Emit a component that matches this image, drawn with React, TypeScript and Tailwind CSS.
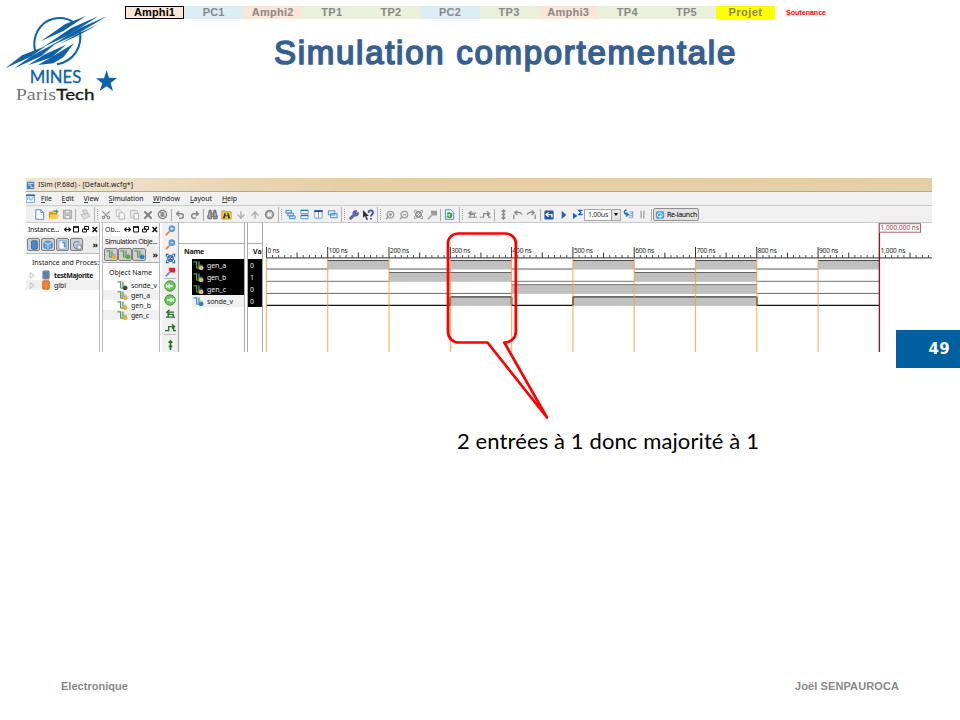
import React, { useLayoutEffect, useRef } from "react";
import { Scissors, Copy, X, Undo2, Redo2, Binoculars, ArrowDown, ArrowUp, CircleX, Wrench, ZoomIn, ZoomOut, Search } from "lucide-react";

/* Text whose tracking is adjusted so that it spans a given width. */
function Fit({ w, className = "", children }: { w: number; className?: string; children: string }) {
  const ref = useRef<HTMLSpanElement>(null);
  useLayoutEffect(() => {
    const el = ref.current;
    if (!el) return;
    el.style.letterSpacing = "0px";
    const natural = el.getBoundingClientRect().width;
    el.style.letterSpacing = `${(w - natural) / children.length}px`;
  }, [w, children]);
  return (
    <span ref={ref} className={`inline-block shrink-0 whitespace-pre ${className}`}>
      {children}
    </span>
  );
}

const tabs = [
  { t: "Amphi1", w: 41, c: "bg-[#fbe5d6] text-black outline outline-[1.5px] -outline-offset-1 outline-black" },
  { t: "PC1", w: 22, c: "bg-[#daeef3] text-[#898989]" },
  { t: "Amphi2", w: 42, c: "bg-[#fbe5d6] text-[#898989]" },
  { t: "TP1", w: 21, c: "bg-[#e9f0dc] text-[#898989]" },
  { t: "TP2", w: 21, c: "bg-[#e9f0dc] text-[#898989]" },
  { t: "PC2", w: 22, c: "bg-[#daeef3] text-[#898989]" },
  { t: "TP3", w: 21, c: "bg-[#e9f0dc] text-[#898989]" },
  { t: "Amphi3", w: 42, c: "bg-[#fbe5d6] text-[#898989]" },
  { t: "TP4", w: 21, c: "bg-[#e9f0dc] text-[#898989]" },
  { t: "TP5", w: 21, c: "bg-[#e9f0dc] text-[#898989]" },
  { t: "Projet", w: 34, c: "bg-[#ffff00] text-[#898950]" },
];

function Logo() {
  return (
    <svg className="block h-[110px] w-[124px]" viewBox="0 0 372 330">
      <g stroke="#0f62a5" strokeWidth="6" fill="none">
        <path d="M106 156C94 112 118 66 160 56c24-5 46 0 62 12" />
        <path d="M239 92c10 48-18 92-68 101" />
      </g>
      <g fill="#0f62a5">
        <path d="M258 48L196 72 122 124 190 93z" />
        <path d="M296 48L214 84 128 142 206 106z" />
        <path d="M322 48L240 84 152 138 226 105z" />
        <path d="M296 72L236 100 178 132 232 108z" />
        <path d="M16 205L66 166 138 138 92 170z" />
        <path d="M43 205L98 166 172 126 124 168z" />
        <path d="M84 196L132 164 198 134 156 172z" />
        <path d="M114 195L160 168 222 130 190 172 160 190z" />
        <path d="M320 211l7 22 24 1-19 15 7 24-19-14-21 14 8-23-19-15h24z" />
      </g>
      <text x="89" y="249" fontFamily="Lato, sans-serif" fontSize="49" textLength="155" lengthAdjust="spacingAndGlyphs" fill="#0f62a5" stroke="#0f62a5" strokeWidth="1">MINES</text>
      <text x="47" y="300" fontFamily="Liberation Serif, serif" fontSize="48" textLength="121" lengthAdjust="spacingAndGlyphs" fill="#77777f">Paris</text>
      <text x="169" y="300" fontFamily="Lato, sans-serif" fontSize="47" textLength="115" lengthAdjust="spacingAndGlyphs" fill="#18181c" stroke="#18181c" strokeWidth="1">Tech</text>
    </svg>
  );
}

function Cell({ w = "w-[14px]", children }: { w?: string; children?: React.ReactNode }) {
  return <span className={`flex h-full shrink-0 items-center justify-center ${w}`}>{children}</span>;
}
const Line = ({ w = "w-[3px]" }: { w?: string }) => (
  <Cell w={w}><i className="h-[12px] w-px bg-[#a9a9a9]" /></Cell>
);
const Grip = ({ w = "w-[8px]" }: { w?: string }) => (
  <Cell w={w}>
    <i className="h-[15px] w-px bg-[#b5b5b5]" />
    <i className="ml-[2px] h-[11px] border-l border-dotted border-[#a0a0a0]" />
  </Cell>
);
function G({ children, size = "size-[11px]" }: { children: React.ReactNode; size?: string }) {
  return <svg viewBox="0 0 12 12" className={`${size} shrink-0`} fill="none">{children}</svg>;
}

const gray = "#8b8b8b";
function Toolbar() {
  return (
    <div className="flex h-[17px] shrink-0 items-center border-b border-[#c9c9c9] bg-[#f0f0f0] pt-px">
      <Cell w="w-[6px]" />
      <Cell><G><path d="M2 .8h5.5l3 3V11.300H2z" fill="#fff" stroke="#3f86d0" /><path d="M7.500 .8v3h3" stroke="#3f86d0" /></G></Cell>
      <Cell><G><path d="M1 3h4l1 1h4v7H1z" fill="#d99a1b" /><path d="M3 6h9l-2 5H1z" fill="#f7cf48" /><path d="M5 3c1-2 3-2 4-1V0l2.500 3L9 5V3.500C8 3 6.500 3 5 3z" fill="#3ea02e" /></G></Cell>
      <Cell><G><path d="M1.500 1.500h9v9h-9z" fill="#c9c9c9" stroke="#a2a2a2" /><path d="M3.500 1.500h5v3h-5zM3.500 7h5v3.500h-5z" fill="#eee" stroke="#aaa" /></G></Cell>
      <Line />
      <Cell w="w-[16px]"><G><path d="M3 1h4l2 4H4zM1 6l8-1 2 3-7 3z" fill="#ddd" stroke="#bdbdbd" /></G></Cell>
      <Grip w="w-[6px]" />
      <Cell><Scissors size={10} strokeWidth={2.500} color={gray} className="-rotate-90" /></Cell>
      <Cell><G><path d="M1.500 1h4l2 2v5h-6z" fill="#f4f4f4" stroke="#bbb" /><path d="M4.500 4h4l2 2v5h-6z" fill="#f4f4f4" stroke="#b0b0b0" /></G></Cell>
      <Cell><G><path d="M1.500 1.500h7l1 2v6h-8z" fill="#e9e9e9" stroke="#b8b8b8" /><path d="M5.500 5h5v6h-5z" fill="#fff" stroke="#aaa" /></G></Cell>
      <Cell><X size={12} strokeWidth={4} color="#818181" /></Cell>
      <Cell w="w-[15px]"><G><circle cx="6" cy="6" r="4.500" stroke="#777" strokeWidth="1.300" /><path d="M4.500 4h3v4h-3zM3 3l6 6M3.500 8l5-5" fill="#999" stroke="#888" /></G></Cell>
      <Line />
      <Cell><Undo2 size={10} strokeWidth={3.500} color="#858585" /></Cell>
      <Cell w="w-[15px]"><Redo2 size={10} strokeWidth={3.500} color="#858585" /></Cell>
      <Line />
      <Cell><Binoculars size={11} strokeWidth={2.600} color="#777" fill="#aaa" /></Cell>
      <Cell w="w-[15px]"><G><path d="M1 2h4l1 1h5v8H1z" fill="#f2cd45" stroke="#c49920" /><path d="M2 10l2-6h1v3h2V4h1l2 6H7.500V8h-3v2z" fill="#333" /></G></Cell>
      <Cell><ArrowDown size={10} strokeWidth={3.500} color="#b0b0b0" /></Cell>
      <Cell><ArrowUp size={10} strokeWidth={3.500} color="#b0b0b0" /></Cell>
      <Cell><G><circle cx="6" cy="6" r="4.200" fill="#ccc" stroke="#8a8a8a" strokeWidth="1.800" /><path d="M4.300 4.300l3.400 3.400M7.700 4.300L4.300 7.700" stroke="#fff" strokeWidth="1.500" /></G></Cell>
      <Grip w="w-[7px]" />
      <Cell><G><path d="M1 1.500h6v3H1zM3 4.500h6v3H3zM5 7.500h6v3H5z" fill="#d9ebfb" stroke="#3884cf" /></G></Cell>
      <Cell><G><path d="M2 1.500h8v3.500H2zM2 7h8v3.500H2z" fill="#fff" stroke="#4b93d6" /><path d="M2 1.500h8M2 7h8" stroke="#2471c0" strokeWidth="1.600" /></G></Cell>
      <Cell><G><path d="M2 2h8v8H2zM6 2v8" fill="#fff" stroke="#6b99d2" /><path d="M1.500 2.300h9" stroke="#174c98" strokeWidth="2" /></G></Cell>
      <Cell><G><path d="M1.500 2h7v4.500h-7zM4 5h7v4.500H4z" fill="#e4f0fc" stroke="#3d87ce" /></G></Cell>
      <Grip />
      <Cell><Wrench size={10} strokeWidth={3} color="#5658a5" fill="#7477bd" /></Cell>
      <Cell><G size="size-[12px]"><path d="M1 1v8l2-2 1.500 4 1.500-.6L4.500 7H7z" fill="#333" /><path d="M6.500 4c0-4 5-3 4.500 0-.3 1.500-2 1.500-2 3.500M9 9v1.500" stroke="#24539b" strokeWidth="1.700" /></G></Cell>
      <Grip />
      <Cell><ZoomIn size={10} strokeWidth={3} color="#999" className="-scale-x-100" /></Cell>
      <Cell><ZoomOut size={10} strokeWidth={3} color="#999" className="-scale-x-100" /></Cell>
      <Cell><G><circle cx="6" cy="6" r="3" stroke="#888" strokeWidth="1.500" /><path d="M1.500 4V1.500H4M8 1.500h2.500V4M10.500 8v2.500H8M4 10.500H1.500V8M4 4l4 4M8 4L4 8" stroke="#999" /></G></Cell>
      <Cell><G><path d="M1 11l4-4" stroke="#aaa" strokeWidth="2" /><path d="M4 2h7v5H5z" fill="#999" /></G></Cell>
      <Line />
      <Cell w="w-[15px]"><G><path d="M1.500 .8h6l3 3v7.500h-9z" fill="#e5f2fc" stroke="#4c8dcc" /><path d="M3 6c0-3 4-3 5-1l1-1v3H6l1-1C6 5 5 5 5 6zM9 7c0 3-3 4-5 2l-1 1V7h3L5 8c1 1 2 0 2-1z" fill="#3a9d34" /></G></Cell>
      <Grip />
      <Cell><G><path d="M1 9h10M3.500 9V6h4.500V9M5 2.500L2 4.500l3 2M3 4.500h7" stroke="#8a8a8a" strokeWidth="1.300" /></G></Cell>
      <Cell w="w-[13px]"><G><path d="M0 9h4V5h6M9.500 5v4H12M7.500 2.500l3 2.500-3 2" stroke="#8a8a8a" strokeWidth="1.300" /></G></Cell>
      <Line w="w-[4px]" />
      <Cell><G><path d="M6 1v10M4 3l2-2 2 2M4 9l2 2 2-2M4 6h4" stroke={gray} strokeWidth="1.500" /></G></Cell>
      <Cell><G><path d="M2 11V6M5.500 1.500L3 4l3 2.500M3 4c4-1 7 0 8 2" stroke={gray} strokeWidth="1.400" /></G></Cell>
      <Cell><G><path d="M10 11V6M6.500 1.500L9 4 6 6.500M9 4C5 3 2 4 1 6" stroke={gray} strokeWidth="1.400" /></G></Cell>
      <Line w="w-[4px]" />
      <Cell><G size="size-[10px]"><rect x=".5" y=".5" width="11" height="11" rx="1.500" fill="#1c5aa5" /><path d="M9.500 9V5.500H3M5.500 3L2.500 5.500l3 2.500" stroke="#fff" strokeWidth="1.500" /></G></Cell>
      <Cell><G><path d="M4 2l5 4.500L4 11z" fill="#1f62b5" /></G></Cell>
      <Cell><G><path d="M1 4l5 3.500L1 11z" fill="#1f62b5" /><path d="M11.500 1.500h-4l2 2-2 2.500h4" stroke="#1f62b5" strokeWidth="1.400" /></G></Cell>
      <span className="flex h-[12px] w-[37px] shrink-0 items-center justify-between border border-[#a7a7a7] bg-white pl-[3px] text-[7px] leading-none text-[#333]">
        <Fit w={20}>1.00us</Fit>
        <span className="flex h-full w-[9px] items-center justify-center border-l border-[#999] bg-[#e4e4e4]"><i className="border-x-[2.500px] border-t-[3px] border-x-transparent border-t-black" /></span>
      </span>
      <Cell><G><path d="M4 1C0 2 1 6 5 6M3 4l3 2-3 2" stroke="#2275bd" strokeWidth="1.500" /><path d="M7 3h4M8 5h3M7 7h4M6 9h5M10.500 3v7" stroke="#72a4d2" /></G></Cell>
      <Cell><G><path d="M4.500 2v8M7.500 2v8" stroke="#999" strokeWidth="1.300" /></G></Cell>
      <Line w="w-[4px]" />
      <span className="flex h-[13px] w-[46px] shrink-0 items-center gap-[2px] rounded-[2px] border border-[#8f8f8f] bg-[#e1e1e1] pl-[1px] text-[7px] leading-none text-black">
        <G size="size-[10px]"><rect x="1" y="1.500" width="10" height="9" rx="2" fill="#4b9edb" /><path d="M4 8.500C1.500 5 4 3.500 6 3.500s4 2 2 4.500H5M7 6L5 8l2 2" stroke="#fff" strokeWidth="1.200" /></G>
        <Fit w={30}>Re-launch</Fit>
      </span>
    </div>
  );
}

function DockButtons() {
  return (
    <svg viewBox="0 0 35 9" className="h-[9px] w-[35px] shrink-0" fill="none" stroke="#111">
      <path d="M.5 4.500h6M2.500 2.500l-2 2 2 2M4.500 2.500l2 2-2 2" strokeWidth="1.100" />
      <path d="M9.500 2h5v5h-5z" />
      <path d="M9 2h6" strokeWidth="1.600" />
      <path d="M20.500 1.500h4v3h-4zM18.500 4h4v3h-4z" fill="#fff" />
      <path d="M28.500 2l4.500 5M33 2l-4.500 5" strokeWidth="1.500" />
    </svg>
  );
}

function SignalIcon({ dot = "#e6b43a", line = "#5b9a60" }: { dot?: string; line?: string }) {
  return (
    <G size="size-[11px]">
      <path d="M.5 2H4v7M6.500 1.500V9H8" stroke={line} strokeWidth="1.400" />
      <path d="M4 9h2.500" stroke={line} />
      <rect x="6.500" y="6.500" width="4.800" height="4.500" rx="1.500" fill={dot} />
      <path d="M7.500 7V5.500h2.500V7" stroke="#999" strokeWidth=".8" />
    </G>
  );
}

const Pressed = ({ children, w = "w-[14px]" }: { children: React.ReactNode; w?: string }) => (
  <span className={`flex h-[13px] shrink-0 items-center justify-center rounded-[2px] border border-[#7f7f7f] bg-[#cfcfcf] ${w}`}>{children}</span>
);

function InstancePanel() {
  return (
    <div className="flex w-[74px] shrink-0 flex-col overflow-hidden border-r border-[#bbb] bg-white">
      <div className="flex h-[13px] shrink-0 items-center justify-between text-[7px] leading-none"><Fit w={33} className="pl-[2px]">Instance...</Fit><DockButtons /></div>
      <div className="flex h-[17px] shrink-0 items-center gap-px bg-[#ececec] pl-[1px]">
        <Pressed w="w-[13px]"><G size="size-[10px]"><rect x="3" y="1" width="7" height="10" rx="1" fill="#4a89cb" stroke="#2f65a3" /></G></Pressed>
        <Pressed><G size="size-[10px]"><path d="M6 1l5 2v6l-5 2-5-2V3z" fill="#69a4dc" stroke="#3c7fbf" /><path d="M1 3l5 2 5-2M6 5v6" stroke="#cfe4f7" /></G></Pressed>
        <Pressed w="w-[13px]"><G size="size-[10px]"><path d="M1 1h9v10H1z" fill="#f7fbff" stroke="#5b99d1" /><path d="M5 3h3v6" stroke="#4d94d0" strokeWidth="2" /></G></Pressed>
        <Pressed w="w-[13px]"><G size="size-[10px]"><path d="M9 3C5 0 1 3 2 7s5 4 6 3" stroke="#5790c4" strokeWidth="1.300" /><path d="M6 6h5v5H6z" stroke="#777" fill="#e8eef7" /></G></Pressed>
        <span className="ml-auto pr-[1px] text-[9px] font-bold leading-none">»</span>
      </div>
      <div className="flex h-[17px] shrink-0 items-end border-t border-[#bbb] pb-[3px] pl-[6px] text-[7px] leading-[9px]"><Fit w={67}>Instance and Proces:</Fit></div>
      <div className="flex h-[10px] shrink-0 items-center text-[7px] leading-none">
        <span className="w-[15px] pl-[3px]"><G size="size-[7px]"><path d="M2 1l7 5-7 5z" stroke="#999" /></G></span>
        <G size="size-[10px]"><rect x="2" y="1" width="8" height="10" rx="1" fill="#5f7f9f" stroke="#8ba0b7" /></G>
        <Fit w={39} className="ml-[3px] font-bold">testMajorite</Fit>
      </div>
      <div className="flex h-[10px] shrink-0 items-center bg-[#f0f0f0] text-[7px] leading-none">
        <span className="w-[15px] pl-[3px]"><G size="size-[7px]"><path d="M2 1l7 5-7 5z" stroke="#999" /></G></span>
        <G size="size-[10px]"><rect x="2" y="1" width="8" height="10" rx="1" fill="#f1822e" stroke="#cd5f17" /></G>
        <Fit w={12} className="ml-[3px]">glbl</Fit>
      </div>
    </div>
  );
}

function ObjectsPanel() {
  const rows = [
    { n: "sonde_v", w: 26, d: "#444" },
    { n: "gen_a", w: 19, d: "#e6b43a" },
    { n: "gen_b", w: 20, d: "#e6b43a" },
    { n: "gen_c", w: 18, d: "#e6b43a" },
  ];
  return (
    <div className="ml-[2px] flex w-[58px] shrink-0 flex-col overflow-hidden border-x border-[#bbb] bg-white">
      <div className="flex h-[13px] shrink-0 items-center justify-between text-[7px] leading-none"><Fit w={17} className="pl-[2px]">Ob...</Fit><DockButtons /></div>
      <div className="flex h-[11px] shrink-0 items-center bg-[#f2f2f2] pl-[2px] text-[7px] leading-none"><Fit w={52}>Simulation Obje...</Fit></div>
      <div className="flex h-[15px] shrink-0 items-center bg-[#ececec] pl-px">
        <Pressed><SignalIcon /></Pressed>
        <Pressed><SignalIcon dot="#53a946" /></Pressed>
        <Pressed><SignalIcon dot="#2f80bf" /></Pressed>
        <span className="ml-auto pr-[1px] text-[9px] font-bold leading-none">»</span>
      </div>
      <div className="flex h-[18px] shrink-0 items-center border-t border-[#aaa] pl-[6px] pt-[2px] text-[7px] leading-none"><Fit w={43}>Object Name</Fit></div>
      {rows.map((r, i) => (
        <div key={r.n} className={`flex h-[10px] shrink-0 items-center pl-[14px] text-[7px] leading-none ${i % 2 ? "bg-[#f0f0f0]" : "bg-white"}`}>
          <SignalIcon dot={r.d} />
          <Fit w={r.w} className="ml-[3px]">{r.n}</Fit>
        </div>
      ))}
    </div>
  );
}

function SideTools() {
  const lens = (k: string, extra?: React.ReactNode) => (
    <span key={k} className="flex h-[14px] items-center"><G><path d="M1 11l4-4" stroke="#e5893b" strokeWidth="2" /><circle cx="7.500" cy="4" r="3.200" fill="#5d9fe0" stroke="#4b8bd0" />{extra}</G></span>
  );
  return (
    <div className="ml-[2px] flex w-[17px] shrink-0 flex-col items-center border-r border-[#a5a5a5] bg-[#f0f0f0]">
      {lens("in", <path d="M6 4h3M7.500 2.500v3" stroke="#fff" />)}
      {lens("out", <path d="M6 4h3" stroke="#fff" />)}
      <span className="flex h-[14px] items-center"><G><circle cx="6" cy="6" r="3" fill="#fff" stroke="#2b69b1" strokeWidth="1.500" /><path d="M1.500 4V1.500H4M8 1.500h2.500V4M10.500 8v2.500H8M4 10.500H1.500V8M4 4l4 4M8 4L4 8" stroke="#2b69b1" strokeWidth="1.300" /></G></span>
      <span className="flex h-[13px] items-center"><G><path d="M1 11l4-4" stroke="#5a91ca" strokeWidth="2" /><path d="M4 2h7v5H5z" fill="#de2537" /></G></span>
      <i className="h-px w-[12px] bg-[#bbb]" />
      {[0, 1].map((k) => (
        <span key={k} className="flex h-[14px] items-center"><G size="size-[12px]"><circle cx="6" cy="6" r="5.200" fill="#6cc45c" stroke="#3f9c38" /><path d={k ? "M3 6h4M6 4l2.500 2L6 8M9.500 4v4" : "M9 6H5M6 4L3.500 6 6 8M2.500 4v4"} stroke="#e4ffe0" strokeWidth="1.300" /></G></span>
      ))}
      <span className="flex h-[13px] items-center"><G><path d="M1 10h10M3.500 10V7H9v3M5 2L2 4.500 5 7M3 4.500h7" stroke="#267032" strokeWidth="1.400" /></G></span>
      <span className="flex h-[14px] items-center"><G><path d="M0 9.500h4V5h6M9.500 5v4.500H12M7.500 2.500l3 2.500-3 2" stroke="#267032" strokeWidth="1.400" /></G></span>
      <i className="h-px w-[12px] bg-[#bbb]" />
      <span className="flex h-[16px] items-center pt-1"><G><path d="M6 1v10M4 3l2-2 2 2M4 7h4" stroke="#267032" strokeWidth="1.800" /></G></span>
    </div>
  );
}

const signals = [
  { n: "gen_a", v: "0", hi: 37.500, lo: 46, c: "#929292", top: "#4b4b4b", on: [[100, 200], [300, 400], [500, 600], [700, 800], [900, 1000]], lw: 1.500 },
  { n: "gen_b", v: "1", hi: 49.500, lo: 58.300, c: "#747474", top: "#666", on: [[200, 400], [600, 800]], lw: 1 },
  { n: "gen_c", v: "0", hi: 61.700, lo: 70.400, c: "#696969", top: "#8b8b8b", on: [[400, 800]], lw: 1 },
  { n: "sonde_v", v: "0", hi: 73.800, lo: 82.400, c: "#111", top: "#3c3c3c", on: [[300, 400], [500, 800]], lw: 1.200 },
];

function Waves() {
  const X0 = 3.400;
  const x = (t: number) => X0 + t * 0.613;
  const ticks = Array.from({ length: 109 }, (_, i) => i * 10);
  return (
    <svg className="block h-[129px] w-[669px] shrink-0 bg-white" viewBox="0 0 669 129" fontFamily="Noto Sans, sans-serif">
      <path d="M3 34.800H669" stroke="#555" strokeWidth="1.200" />
      {ticks.map((t) => (
        <path key={t} d={`M${x(t)} 35V${t % 100 === 0 ? 24 : t % 50 === 0 ? 29.500 : 32}`} stroke={t % 50 === 0 ? "#333" : "#555"} strokeWidth="1" />
      ))}
      {signals.map((s) => {
        const edges: [number, number, boolean][] = [];
        let p = 0;
        s.on.forEach(([a, b]) => {
          if (a > p) edges.push([p, a, false]);
          edges.push([a, b, true]);
          p = b;
        });
        if (p < 1000) edges.push([p, 1000, false]);
        return edges.map(([a, b, high]) => (
          <g key={`${s.n}${a}`}>
            {high && <rect x={x(a)} y={s.hi} width={x(b) - x(a)} height={s.lo - s.hi + 0.500} fill="#c0c0c0" />}
            <path d={`M${x(a)} ${high ? s.hi : s.lo}H${x(b)}`} stroke={high ? s.top : s.c} strokeWidth={high ? 1.200 : s.lw} />
            {high && s.n === "sonde_v" && <path d={`M${x(a)} ${s.hi}V${s.lo}M${x(b)} ${s.hi}V${s.lo}`} stroke="#222" strokeWidth="1.600" />}
          </g>
        ));
      })}
      {Array.from({ length: 10 }, (_, i) => (
        <path key={i} d={`M${x(i * 100)} 36V129`} stroke="#ff9c35" strokeOpacity=".75" strokeWidth="1.200" />
      ))}
      {Array.from({ length: 11 }, (_, i) => (
        <text key={i} x={x(i * 100) + 1} y="29.500" fontSize="6.500" textLength={i === 0 ? 12 : i === 10 ? 25 : 19} fill="#222">
          {i === 10 ? "1,000 ns" : `${i * 100} ns`}
        </text>
      ))}
      <path d="M616.400 0V129" stroke="#7d1f2a" strokeWidth="1.400" />
      <rect x="616.500" y=".7" width="41" height="8.500" fill="#fff" stroke="#b0606b" />
      <text x="617.500" y="7.300" fontSize="6.500" textLength="38.500" fill="#a63848">1,000.000 ns</text>
    </svg>
  );
}

function SimWindow() {
  const menu = [
    { t: "File", w: 11, f: 3.500, g: 9.500 },
    { t: "Edit", w: 12.500, f: 4, g: 9.500 },
    { t: "View", w: 15.500, f: 4, g: 9.500 },
    { t: "Simulation", w: 35, f: 4, g: 9.500 },
    { t: "Window", w: 27, f: 6.500, g: 10 },
    { t: "Layout", w: 22, f: 3.500, g: 10 },
    { t: "Help", w: 15, f: 5, g: 0 },
  ];
  return (
    <div className="mx-[26px] flex h-[174px] w-[906px] flex-col overflow-hidden bg-white font-['Noto_Sans',sans-serif] text-[#151515]">
      <div className="flex h-[14px] shrink-0 items-center border-b border-[#aaa] bg-linear-100 from-[#f0e5d2] from-0% via-[#e7cea5] via-35% to-[#e5cda5] text-[7px] leading-none">
        <span className="mr-[2px]"><G size="size-[10px]"><rect x="1" y="2" width="9" height="9" fill="#4e84b7" /><path d="M2 4h7M3 6h3v3h3" stroke="#d9eefc" /></G></span>
        <Fit w={95}>ISim (P.68d) - [Default.wcfg*]</Fit>
      </div>
      <div className="flex h-[14px] shrink-0 items-center border-b border-[#ccc] bg-[#f0f0f0] text-[7px] leading-none">
        <span className="mr-[6px]"><G size="size-[9px]"><rect x="0" y="1" width="11" height="10" fill="#fff" stroke="#4382bd" /><path d="M0 2h12" stroke="#286db3" strokeWidth="2" /><path d="M2 8V5h3v3h3V5h2" stroke="#5d92c5" /></G></span>
        {menu.map((m) => (
          <span key={m.t} className="flex" style={{ marginRight: m.g }}>
            <span className="border-b border-[#444]"><Fit w={m.f}>{m.t[0]}</Fit></span>
            <Fit w={m.w - m.f}>{m.t.slice(1)}</Fit>
          </span>
        ))}
      </div>
      <Toolbar />
      <div className="flex h-[129px] shrink-0">
        <InstancePanel />
        <ObjectsPanel />
        <SideTools />
        <div className="flex w-[66px] shrink-0 flex-col border-r border-[#aaa] text-[7px] leading-none">
          <div className="h-[21px] border-b border-[#aaa]" />
          <div className="flex h-[15px] items-center pl-[5px] font-bold"><Fit w={20}>Name</Fit></div>
          {signals.map((s, i) => (
            <div key={s.n} className={`ml-[13px] flex h-[12px] items-center pl-[1px] ${i < 3 ? "bg-black text-[#eee]" : "bg-[#f0f0f0] text-[#222]"}`}>
              <SignalIcon dot={i < 3 ? "#d8bd62" : "#2f7fc4"} line={i < 3 ? "#5b9a60" : "#4695b9"} />
              <Fit w={i < 3 ? 19 : 26} className="ml-[3px]">{s.n}</Fit>
            </div>
          ))}
        </div>
        <div className="ml-[2px] flex w-[16px] shrink-0 flex-col overflow-hidden border-x border-[#aaa] text-[7px] leading-none">
          <div className="h-[21px] shrink-0 border-b border-[#aaa]" />
          <div className="flex h-[15px] items-center pl-[5px] font-bold"><Fit w={9}>Va</Fit></div>
          {signals.map((s) => (
            <div key={s.n} className="flex h-[12px] items-center bg-black pl-[2px] text-[#eee]">{s.v}</div>
          ))}
        </div>
        <Waves />
      </div>
    </div>
  );
}

export default function App() {
  return (
    <div className="relative flex h-[720px] w-[960px] flex-col overflow-hidden bg-white font-['Liberation_Sans',Arial,sans-serif]">
      <header className="flex h-[178px] shrink-0">
        <Logo />
        <div className="flex w-[836px] flex-col pl-px pt-[6px]">
          <nav className="flex h-[13px] items-center text-[11px] font-bold leading-none">
            {tabs.map((t) => (
              <span key={t.t} className={`flex h-[13px] w-[59.100px] shrink-0 items-center justify-center ${t.c}`}>
                <Fit w={t.w}>{t.t}</Fit>
              </span>
            ))}
            <Fit w={40} className="ml-[11px] text-[7px] text-[#ff0000]">Soutenance</Fit>
          </nav>
          <h1 className="ml-[149px] mt-[14px] text-[33px] font-normal leading-[40px] text-[#376092] [-webkit-text-stroke:1.600px_#376092]">
            <Fit w={463}>Simulation comportementale</Fit>
          </h1>
        </div>
      </header>
      <SimWindow />
      <p className="ml-[457px] mt-[75px] font-[Lato,sans-serif] text-[22px] leading-[28px] text-black">
        <Fit w={302}>2 entrées à 1 donc majorité à 1</Fit>
      </p>
      <footer className="mt-auto flex justify-between pb-[27px] pl-[61px] pr-[61px] text-[11px] font-bold leading-[14px] text-[#898989]">
        <Fit w={67}>Electronique</Fit>
        <Fit w={104}>Joël SENPAUROCA</Fit>
      </footer>
      <div className="absolute right-0 top-[330px] flex h-[38px] w-[64px] items-center justify-end bg-[#005f9f] pr-[10px] font-['DejaVu_Sans',sans-serif] text-[15px] font-bold text-white">
        <Fit w={21.500}>49</Fit>
      </div>
      <svg className="absolute left-[440px] top-[226px] h-[200px] w-[120px]" viewBox="440 226 120 200" fill="none">
        <path d="M458.500 233.500H505a11 9.500 0 0 1 10.800 9.500V332a11 10.500 0 0 1-11.500 10.500L547 417.500 487.500 342.500H459a11 10.500 0 0 1-11-10.500V243a10.500 9.500 0 0 1 10.500-9.500z" stroke="#ff0000" strokeWidth="2.700" strokeLinejoin="round" />
      </svg>
    </div>
  );
}
